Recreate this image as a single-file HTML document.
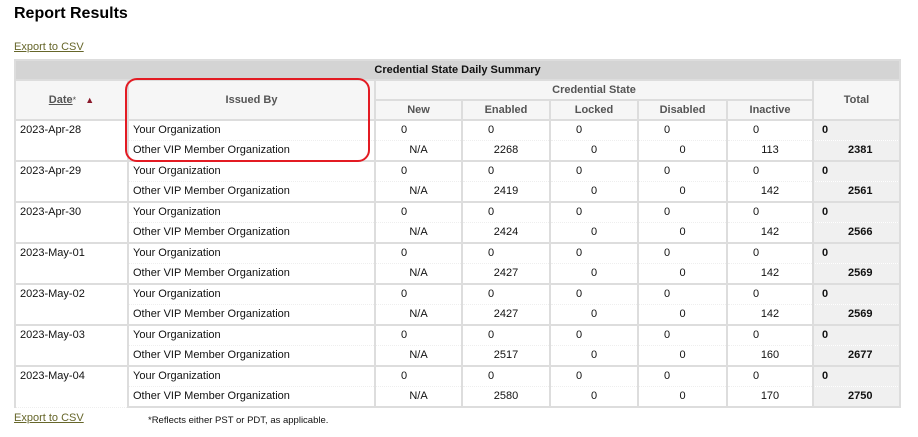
<!DOCTYPE html><html><head><style>
body{margin:0;background:#fff;font-family:"Liberation Sans",Arial,sans-serif;font-size:11px;color:#111;width:918px;height:437px;position:relative;overflow:hidden}
h1{position:absolute;left:14px;top:5px;margin:0;font-size:16px;font-weight:bold;color:#000}
.exp{position:absolute;left:14px;color:#66662a;text-decoration:underline;font-size:11px}
table{position:absolute;left:14px;top:59px;width:885px;border-collapse:collapse;table-layout:fixed}
td,th{padding:0;border:2px solid #ddd;height:18px;line-height:18px;overflow:hidden;white-space:nowrap}
th{background:#f6f6f6;color:#555;font-weight:bold;text-align:center}
th.t{background:#d4d4d4;color:#111;height:17px}
td{vertical-align:top;height:19px;line-height:19px}
td.d{padding-left:4px}
td.i{padding-left:4px}
tr.a td{border-bottom:1px dotted #eee}
tr.b td{border-top:1px dotted #eee}
td.n{text-align:left;padding-left:25px}
tr.b td.n{text-align:center;padding-left:0}
td.tot{background:#f0f0f0;font-weight:bold;padding-left:8px;text-align:left}
tr.b td.tot{padding-left:34px}
.red{position:absolute;left:125px;top:78px;width:241px;height:80px;border:2px solid #e31b23;border-radius:12px}
</style></head><body>
<h1>Report Results</h1>
<div class="exp" style="top:41px">Export to CSV</div>
<table>
<colgroup><col style="width:113px"><col style="width:247px"><col style="width:87px"><col style="width:88px"><col style="width:88px"><col style="width:89px"><col style="width:86px"><col style="width:87px"></colgroup>
<tr><th class="t" colspan="8">Credential State Daily Summary</th></tr>
<tr><th rowspan="2" style="height:38px"><span style="color:#555;text-decoration:underline">Date</span><span style="font-weight:normal;font-size:9px;vertical-align:top">*</span> &nbsp; <span style="color:#8b1a2b;font-size:9px">▲</span></th><th rowspan="2">Issued By</th><th colspan="5">Credential State</th><th rowspan="2">Total</th></tr>
<tr><th>New</th><th>Enabled</th><th>Locked</th><th>Disabled</th><th>Inactive</th></tr>
<tr class="a"><td class="d" rowspan="2">2023-Apr-28</td><td class="i">Your Organization</td><td class="n">0</td><td class="n">0</td><td class="n">0</td><td class="n">0</td><td class="n">0</td><td class="tot">0</td></tr>
<tr class="b"><td class="i">Other VIP Member Organization</td><td class="n">N/A</td><td class="n">2268</td><td class="n">0</td><td class="n">0</td><td class="n">113</td><td class="tot">2381</td></tr>
<tr class="a"><td class="d" rowspan="2">2023-Apr-29</td><td class="i">Your Organization</td><td class="n">0</td><td class="n">0</td><td class="n">0</td><td class="n">0</td><td class="n">0</td><td class="tot">0</td></tr>
<tr class="b"><td class="i">Other VIP Member Organization</td><td class="n">N/A</td><td class="n">2419</td><td class="n">0</td><td class="n">0</td><td class="n">142</td><td class="tot">2561</td></tr>
<tr class="a"><td class="d" rowspan="2">2023-Apr-30</td><td class="i">Your Organization</td><td class="n">0</td><td class="n">0</td><td class="n">0</td><td class="n">0</td><td class="n">0</td><td class="tot">0</td></tr>
<tr class="b"><td class="i">Other VIP Member Organization</td><td class="n">N/A</td><td class="n">2424</td><td class="n">0</td><td class="n">0</td><td class="n">142</td><td class="tot">2566</td></tr>
<tr class="a"><td class="d" rowspan="2">2023-May-01</td><td class="i">Your Organization</td><td class="n">0</td><td class="n">0</td><td class="n">0</td><td class="n">0</td><td class="n">0</td><td class="tot">0</td></tr>
<tr class="b"><td class="i">Other VIP Member Organization</td><td class="n">N/A</td><td class="n">2427</td><td class="n">0</td><td class="n">0</td><td class="n">142</td><td class="tot">2569</td></tr>
<tr class="a"><td class="d" rowspan="2">2023-May-02</td><td class="i">Your Organization</td><td class="n">0</td><td class="n">0</td><td class="n">0</td><td class="n">0</td><td class="n">0</td><td class="tot">0</td></tr>
<tr class="b"><td class="i">Other VIP Member Organization</td><td class="n">N/A</td><td class="n">2427</td><td class="n">0</td><td class="n">0</td><td class="n">142</td><td class="tot">2569</td></tr>
<tr class="a"><td class="d" rowspan="2">2023-May-03</td><td class="i">Your Organization</td><td class="n">0</td><td class="n">0</td><td class="n">0</td><td class="n">0</td><td class="n">0</td><td class="tot">0</td></tr>
<tr class="b"><td class="i">Other VIP Member Organization</td><td class="n">N/A</td><td class="n">2517</td><td class="n">0</td><td class="n">0</td><td class="n">160</td><td class="tot">2677</td></tr>
<tr class="a"><td class="d" rowspan="2">2023-May-04</td><td class="i">Your Organization</td><td class="n">0</td><td class="n">0</td><td class="n">0</td><td class="n">0</td><td class="n">0</td><td class="tot">0</td></tr>
<tr class="b"><td class="i">Other VIP Member Organization</td><td class="n">N/A</td><td class="n">2580</td><td class="n">0</td><td class="n">0</td><td class="n">170</td><td class="tot">2750</td></tr>
</table>
<div class="red"></div>
<div class="exp" style="top:412px">Export to CSV</div>
<div style="position:absolute;left:148px;top:415px;font-size:9.5px;color:#111">*Reflects either PST or PDT, as applicable.</div>
</body></html>
